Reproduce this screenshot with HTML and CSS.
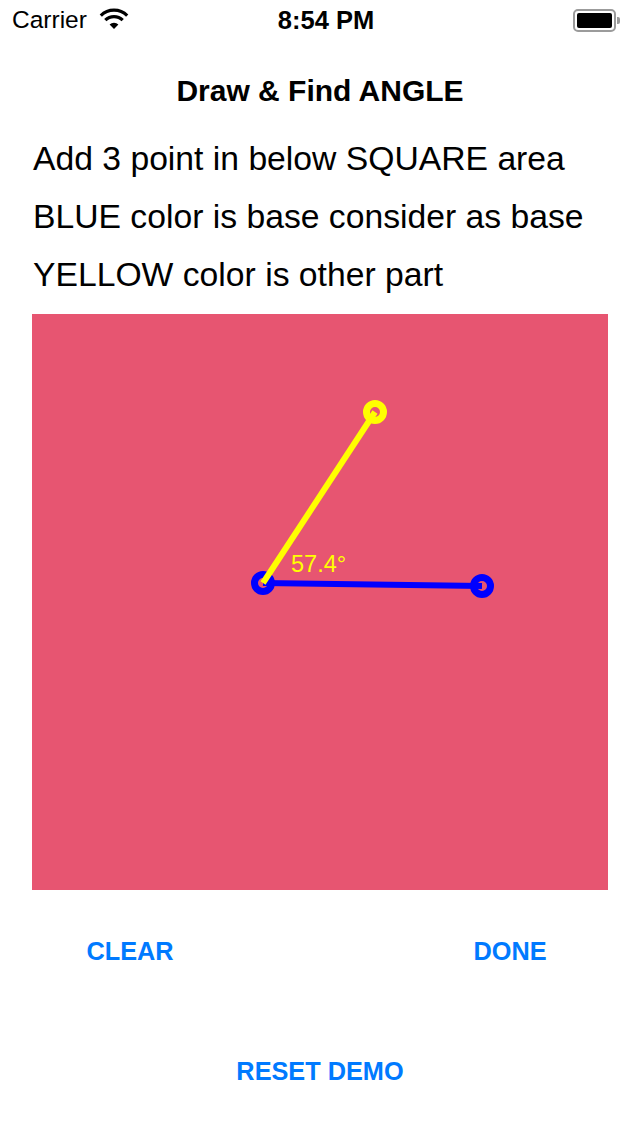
FILE: index.html
```html
<!DOCTYPE html>
<html>
<head>
<meta charset="utf-8">
<link rel="stylesheet" href="styles.css">
</head>
<body>
<div class="screen">
  <div class="status">
    <div class="status-left">
      <span class="carrier">Carrier</span>
      <svg class="wifi" width="30" height="22" viewBox="0 0 30 22">
        <path d="M15 21 L10.6 16.4 A6.4 6.4 0 0 1 19.4 16.4 Z" fill="#000"/>
        <path d="M6.3 12.2 A12.3 12.3 0 0 1 23.7 12.2" fill="none" stroke="#000" stroke-width="3.2"/>
        <path d="M1.8 7.6 A18.8 18.8 0 0 1 28.2 7.6" fill="none" stroke="#000" stroke-width="3.2"/>
      </svg>
    </div>
    <div class="time">8:54 PM</div>
    <div class="status-right">
      <div class="battery"><div class="battery-fill"></div></div>
      <div class="battery-nub"></div>
    </div>
  </div>

  <h1 class="title">Draw &amp; Find ANGLE</h1>

  <div class="instructions">
    <p class="line">Add 3 point in below SQUARE area</p>
    <p class="line">BLUE color is base consider as base</p>
    <p class="line">YELLOW color is other part</p>
  </div>

  <div class="canvas">
    <svg class="drawing" width="576" height="576" viewBox="0 0 576 576">
      <circle cx="450" cy="272" r="8.5" fill="none" stroke="#0000ff" stroke-width="7"/>
      <circle cx="231" cy="269" r="8.5" fill="none" stroke="#0000ff" stroke-width="7"/>
      <line x1="231" y1="269" x2="450" y2="272" stroke="#0000ff" stroke-width="6"/>
      <circle cx="343" cy="98" r="8.5" fill="none" stroke="#ffff00" stroke-width="7"/>
      <line x1="231" y1="269" x2="343" y2="98" stroke="#ffff00" stroke-width="6"/>
      <text x="259" y="258" class="angle-label">57.4°</text>
    </svg>
  </div>

  <div class="actions">
    <button class="btn">CLEAR</button>
    <button class="btn">DONE</button>
  </div>
  <div class="reset-row">
    <button class="btn">RESET DEMO</button>
  </div>
</div>
</body>
</html>
```

FILE: styles.css
```css
html, body {
  margin: 0;
  padding: 0;
  background: #ffffff;
}

.screen {
  width: 640px;
  height: 1136px;
  font-family: "Liberation Sans", Arial, sans-serif;
  color: #000;
  display: flex;
  flex-direction: column;
}

.status {
  height: 40px;
  display: grid;
  grid-template-columns: 1fr auto 1fr;
  align-items: center;
  padding: 0 20px 0 12px;
}

.status-left {
  display: flex;
  align-items: center;
  gap: 12px;
}

.carrier {
  font-size: 24.5px;
}

.wifi {
  margin-top: -2px;
}

.time {
  font-size: 25.5px;
  font-weight: bold;
  margin-left: 20px;
}

.status-right {
  display: flex;
  justify-content: flex-end;
  align-items: center;
}

.battery {
  width: 35px;
  height: 15px;
  border: 2px solid #9b9b9b;
  border-radius: 5px;
  padding: 2px;
  box-sizing: content-box;
  display: flex;
}

.battery-fill {
  flex: 1;
  background: #000;
  border-radius: 2px;
}

.battery-nub {
  width: 3px;
  height: 7px;
  background: #9b9b9b;
  border-radius: 0 2px 2px 0;
  margin-left: 1px;
}

.title {
  margin: 31px 0 0;
  height: 40px;
  line-height: 40px;
  font-size: 30px;
  font-weight: bold;
  text-align: center;
}

.instructions {
  margin-top: 18px;
  padding-left: 33px;
}

.line {
  margin: 0;
  height: 58px;
  line-height: 58px;
  font-size: 33.7px;
  white-space: nowrap;
}

.canvas {
  margin: 0 32px;
  margin-top: 11px;
  height: 576px;
  background: #e75571;
}

.drawing {
  display: block;
}

.angle-label {
  fill: #ffff00;
  font-family: "Liberation Sans", Arial, sans-serif;
  font-size: 23.5px;
}

.btn {
  background: none;
  border: none;
  padding: 0;
  font-family: "Liberation Sans", Arial, sans-serif;
  font-weight: bold;
  font-size: 25.3px;
  color: #007aff;
  height: 40px;
  line-height: 40px;
}

.actions {
  display: flex;
  justify-content: space-between;
  margin: 41px 32px 0;
}

.actions .btn {
  width: 196px;
  text-align: center;
}

.reset-row {
  display: flex;
  justify-content: center;
  margin-top: 80px;
}
```
